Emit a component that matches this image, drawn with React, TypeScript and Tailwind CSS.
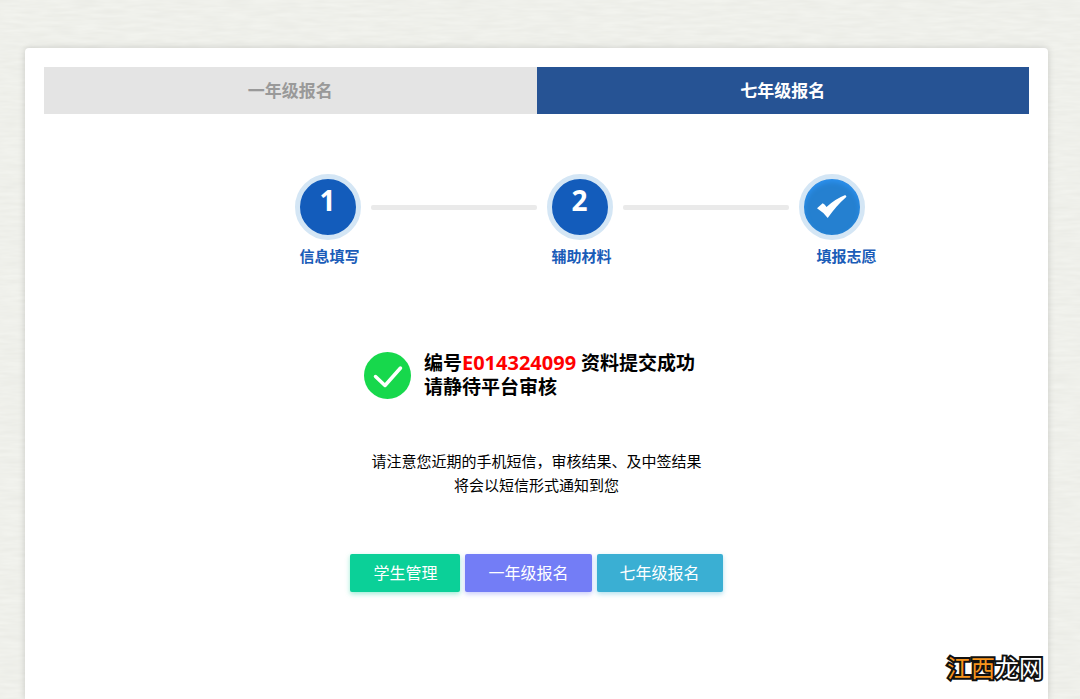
import { useState } from 'react';

const TABS = ['一年级报名', '七年级报名'];

const ACTIONS = [
    { label: '学生管理', cls: 'bg-[#0bd098] shadow-[0_2px_5px_rgba(11,208,152,0.4)]' },
    { label: '一年级报名', cls: 'bg-[#737df6] shadow-[0_2px_5px_rgba(115,125,246,0.4)]' },
    { label: '七年级报名', cls: 'bg-[#3aafd3] shadow-[0_2px_5px_rgba(58,175,211,0.4)]' },
];

function PaperTexture() {
    return (
        <svg className="absolute inset-0 w-full h-full" aria-hidden="true">
            <filter id="paper" x="0" y="0" width="100%" height="100%">
                <feTurbulence type="fractalNoise" baseFrequency="0.04 0.28" numOctaves="2" seed="4" />
                <feColorMatrix values="0 0 0 0 0.55  0 0 0 0 0.55  0 0 0 0 0.5  0.22 0 0 0 -0.04" />
            </filter>
            <rect width="100%" height="100%" filter="url(#paper)" />
        </svg>
    );
}

function StepNumber({ n }: { n: number }) {
    return (
        <div className="flex items-center">
            <span className="w-[66px] h-[66px] shrink-0 rounded-full border-5 border-[#d4e6f5] bg-[#135cbb] text-white text-[28px] leading-none font-bold flex items-center justify-center pb-[14px]">
                {n}
            </span>
            <span className="w-[166px] h-[5px] mx-[10px] rounded-xs bg-[#eaeaea]" />
        </div>
    );
}

export default function App() {
    const [tab, setTab] = useState(1);

    return (
        <div className="relative min-h-screen flex flex-col bg-[#f2f3ee] pt-12 pl-[25px] pr-8 text-black font-['Open_Sans','Noto_Sans_CJK_SC',sans-serif]">
            <PaperTexture />

            <main className="relative flex-1 rounded-t bg-white px-[19px] pt-[19px] pb-24 shadow-[0_0_7px_rgba(0,0,0,0.16)]">
                {/* Grade tabs */}
                <nav className="grid grid-cols-2">
                    {TABS.map((t, i) => (
                        <button key={t} type="button" onClick={() => setTab(i)}
                            className={`h-[47px] text-[17px] font-bold ${tab === i ? 'bg-[#265394] text-white' : 'bg-[#e4e4e4] text-[#999]'}`}>
                            {t}
                        </button>
                    ))}
                </nav>

                {/* Progress */}
                <ol className="flex justify-center mt-[60px] pl-[116px] text-[15px] leading-6 font-bold text-[#1a5cb8]">
                    <li className="w-[252px]">
                        <StepNumber n={1} />
                        <div className="pl-[5px] mt-1">信息填写</div>
                    </li>
                    <li className="w-[252px]">
                        <StepNumber n={2} />
                        <div className="pl-[5px] mt-1">辅助材料</div>
                    </li>
                    <li className="w-24">
                        <span className="w-[66px] h-[66px] rounded-full border-5 border-[#d4e6f5] bg-[#2580d0] shadow-[inset_0_3px_5px_#2b90ef] flex items-center justify-center">
                            <svg viewBox="0 0 30 24" className="w-[30px] h-6" fill="#fff">
                                <path d="M0 13.300 5.700 8.300Q8 9.300 9.500 12 18 4 28.300 0L29.500 1.700Q19 11 10.700 23 6 17 0 13.300Z" />
                            </svg>
                        </span>
                        <div className="text-center mt-1">填报志愿</div>
                    </li>
                </ol>

                {/* Result */}
                <div className="flex justify-center items-center gap-[13px] mt-[83px] pr-[14px]">
                    <svg viewBox="0 0 47 47" className="w-[47px] h-[47px]">
                        <circle cx="23.5" cy="23.5" r="23.5" fill="#17d84c" />
                        <path d="M11.500 24.500 21 33.500 36.500 16" fill="none" stroke="#fff" strokeWidth="3.5" strokeLinecap="round" strokeLinejoin="round" />
                    </svg>
                    <h1 className="text-[19px] leading-6 font-bold">
                        编号<span className="text-xl leading-6 text-[#f00]">E014324099</span> 资料提交成功
                        <br />
                        请静待平台审核
                    </h1>
                </div>

                <p className="mt-[50px] text-center text-[15px] leading-6">
                    请注意您近期的手机短信，审核结果、及中签结果
                    <br />
                    将会以短信形式通知到您
                </p>

                <div className="flex justify-center gap-[5px] mt-[57px]">
                    {ACTIONS.map(a => (
                        <button key={a.label} type="button" className={`h-[38px] px-[23px] rounded-xs text-base text-white ${a.cls}`}>
                            {a.label}
                        </button>
                    ))}
                </div>
            </main>

            {/* Site mark */}
            <div className="absolute right-[37px] bottom-[15px] text-2xl leading-8 text-white [-webkit-text-stroke:4px_#111] [paint-order:stroke_fill]">
                <span className="text-[#f7941d]">江西</span>龙网
            </div>
        </div>
    );
}
